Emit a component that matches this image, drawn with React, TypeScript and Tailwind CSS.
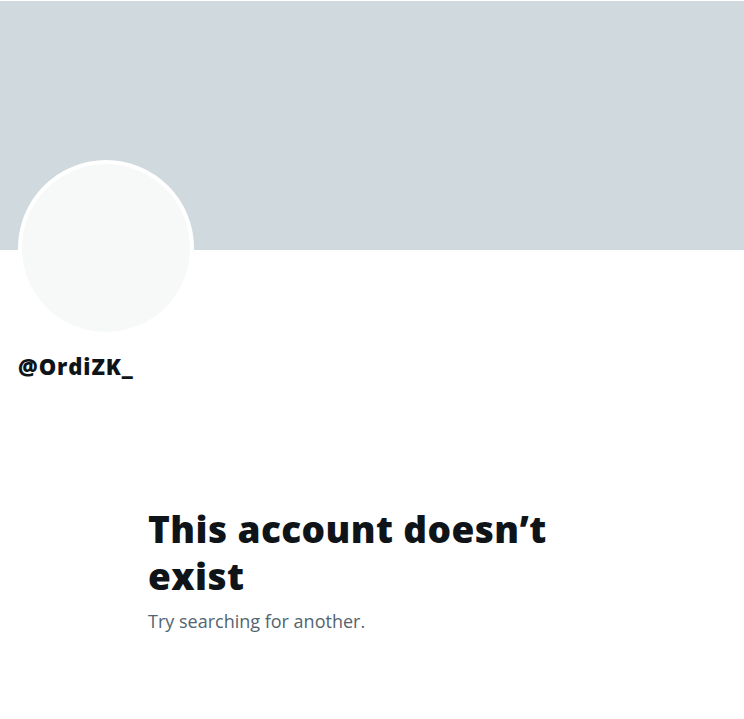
import React from 'react';

export default function App() {
  return (
    <div className="min-h-screen w-[744px] bg-white pt-px font-['Open_Sans','Noto_Sans','Liberation_Sans',sans-serif] text-[#0f1419]">
      {/* banner */}
      <div className="h-[249px] w-full bg-[#cfd9de]" />

      {/* avatar */}
      <div className="px-[18px]">
        <div className="-mt-[90px] h-[176px] w-[176px] rounded-full border-4 border-white bg-[#f7f9f9]" />
      </div>

      {/* handle */}
      <div className="mt-[16px] px-[18px]">
        <span className="text-[22px] font-extrabold leading-[28px] tracking-[0.9px]">@OrdiZK_</span>
      </div>

      {/* empty state */}
      <div className="mx-auto mt-[124px] w-[448px]">
        <h1 className="text-[37px] font-extrabold leading-[47px] tracking-[0.4px]">
          This account doesn’t exist
        </h1>
        <p className="mt-[10px] text-[18px] leading-[24px] text-[#536471]">
          Try searching for another.
        </p>
      </div>
    </div>
  );
}
